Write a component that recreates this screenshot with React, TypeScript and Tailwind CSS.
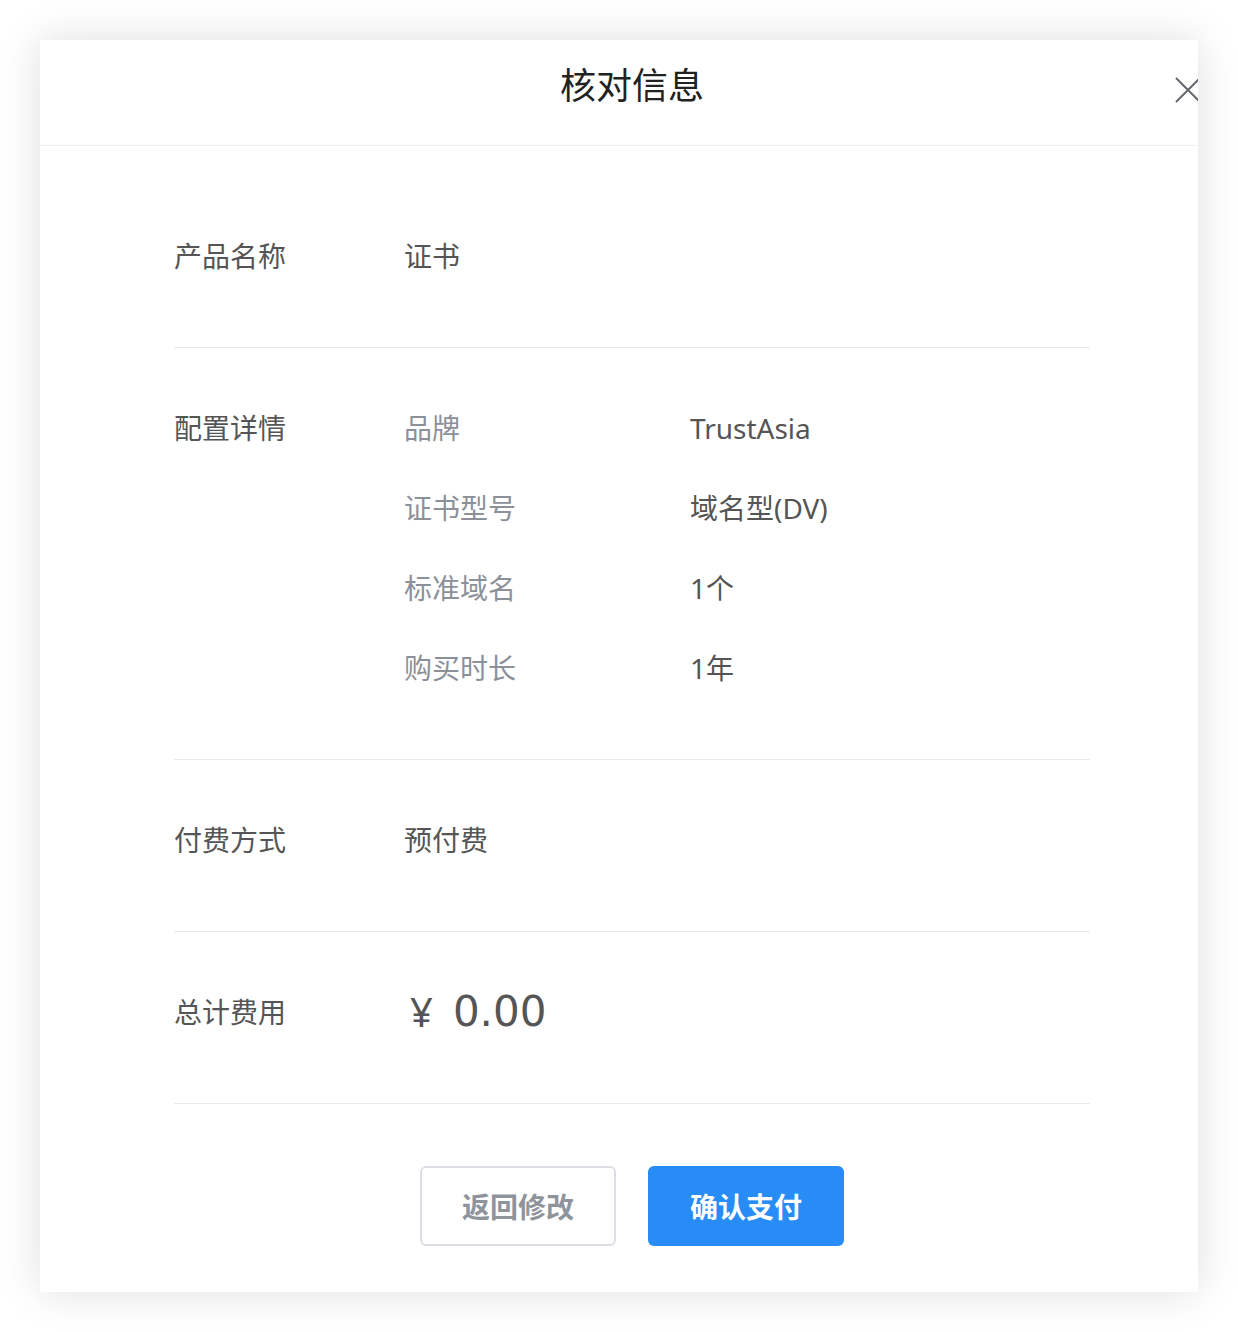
import React from "react";

const font = { fontFamily: '"Noto Sans", "Noto Sans CJK SC", sans-serif' };

function Divider() {
  return <div className="h-px bg-[#e6e9ee]" />;
}

export default function App() {
  return (
    <div className="w-[1238px] h-[1332px] bg-white p-[40px]" style={font}>
      <div className="relative w-[1158px] h-[1252px] bg-white overflow-hidden shadow-[0_0_40px_rgba(0,0,0,0.13)]">
        <div className="h-[106px] border-b border-[#eef1f5] flex items-center justify-center pb-[14px] pl-[26px]">
          <span className="text-[36px] text-[#222] leading-none">核对信息</span>
        </div>
        <svg
          className="absolute left-[1135px] top-[37px]"
          width="26"
          height="26"
          viewBox="0 0 26 26"
          fill="none"
          stroke="#666a70"
          strokeWidth="2"
        >
          <path d="M1 1L25 25M25 1L1 25" />
        </svg>

        <div className="ml-[134px] w-[916px] pt-[30px]">
          {/* 产品名称 */}
          <div className="pt-[60px] pb-[71px] flex text-[28px] leading-[40px]">
            <div className="w-[230px] text-[#555]">产品名称</div>
            <div className="text-[#555]">证书</div>
          </div>
          <Divider />
          {/* 配置详情 */}
          <div className="pt-[60px] pb-[71px] flex text-[28px] leading-[40px]">
            <div className="w-[230px] text-[#555]">配置详情</div>
            <div className="flex flex-col gap-[40px]">
              {[
                ["品牌", "TrustAsia"],
                ["证书型号", "域名型(DV)"],
                ["标准域名", "1个"],
                ["购买时长", "1年"],
              ].map(([k, v]) => (
                <div key={k} className="flex">
                  <div className="w-[286px] text-[#8c9099]">{k}</div>
                  <div className="text-[#555]">{v}</div>
                </div>
              ))}
            </div>
          </div>
          <Divider />
          {/* 付费方式 */}
          <div className="pt-[60px] pb-[71px] flex text-[28px] leading-[40px]">
            <div className="w-[230px] text-[#555]">付费方式</div>
            <div className="text-[#555]">预付费</div>
          </div>
          <Divider />
          {/* 总计费用 */}
          <div className="pt-[60px] pb-[71px] h-[171px] flex items-center text-[28px] leading-[40px]">
            <div className="w-[230px] text-[#555]">总计费用</div>
            <div className="text-[#555] flex items-center pl-[6px] h-[40px]">
              <span className="text-[40px] leading-[40px]">¥</span>
              <span className="ml-[20px] text-[42px] leading-[40px]" style={{ fontFamily: '"DejaVu Sans", sans-serif' }}>0.00</span>
            </div>
          </div>
          <Divider />
        </div>

        <div className="flex justify-center gap-[32px] mt-[62px] pl-[26px]">
          <button className="w-[196px] h-[80px] rounded-[6px] border-2 border-[#dcdfe5] bg-white text-[28px] font-bold text-[#8f949c]" style={{ fontFamily: '"Noto Sans CJK SC", sans-serif' }}>
            返回修改
          </button>
          <button className="w-[196px] h-[80px] rounded-[6px] bg-[#288cf6] text-[28px] font-bold text-white" style={{ fontFamily: '"Noto Sans CJK SC", sans-serif' }}>
            确认支付
          </button>
        </div>
      </div>
    </div>
  );
}
